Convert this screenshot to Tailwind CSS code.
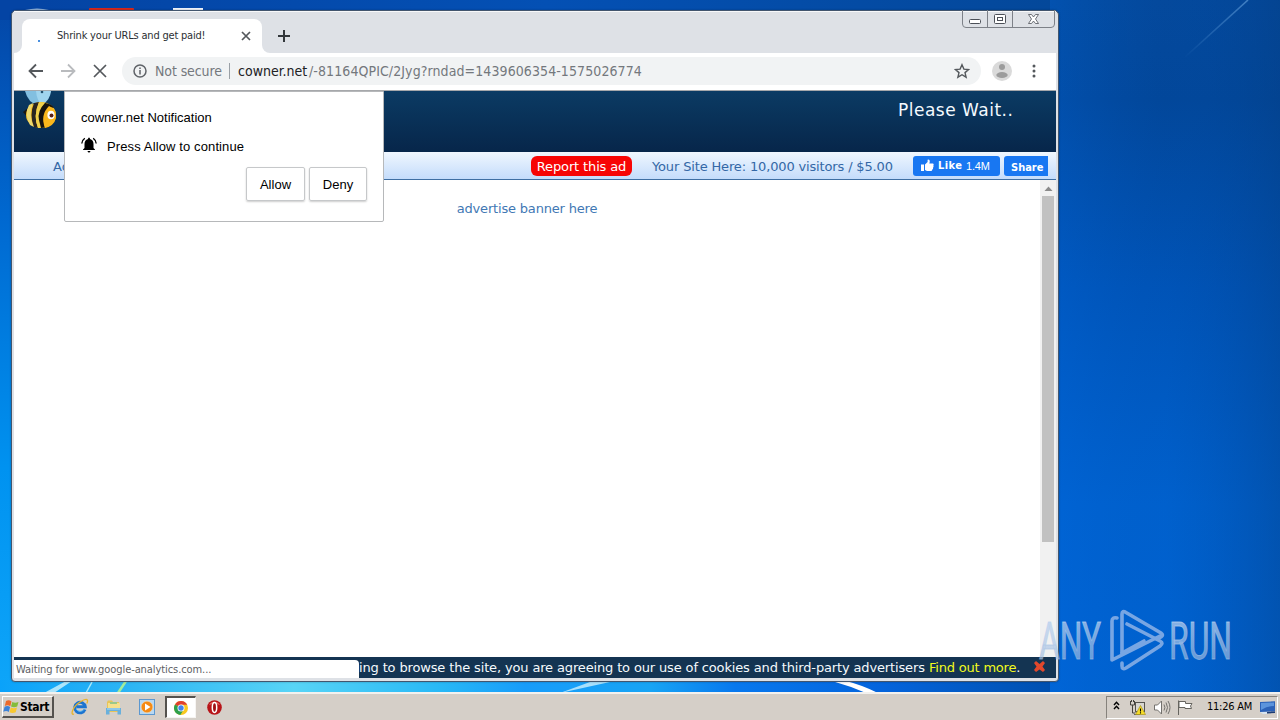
<!DOCTYPE html>
<html lang="en">
<head>
<meta charset="utf-8">
<title>Shrink your URLs and get paid!</title>
<script src="https://cdn.jsdelivr.net/npm/@tailwindcss/browser@4"></script>
</head>
<body class="w-[1280px] h-[720px] overflow-hidden relative bg-[#0068d8] font-['DejaVu_Sans',sans-serif]">

<!-- Desktop wallpaper -->
<svg class="absolute inset-0" width="1280" height="720" viewBox="0 0 1280 720">
  <defs>
    <linearGradient id="left" x1="0" y1="0" x2="0" y2="1">
      <stop offset="0" stop-color="#0446a6"/><stop offset=".3" stop-color="#0068d0"/><stop offset=".65" stop-color="#0092f0"/><stop offset="1" stop-color="#10a8fa"/>
    </linearGradient>
    <linearGradient id="right" x1="0" y1="0" x2="0" y2="1">
      <stop offset="0" stop-color="#04489a"/><stop offset=".14" stop-color="#024698"/><stop offset=".4" stop-color="#0054b8"/><stop offset=".7" stop-color="#0062d0"/><stop offset="1" stop-color="#0064d4"/>
    </linearGradient>
    <linearGradient id="shade" x1="0" y1="0" x2="1" y2="0">
      <stop offset="0" stop-color="#0068e0" stop-opacity=".3"/><stop offset=".5" stop-color="#0050b0" stop-opacity=".1"/><stop offset="1" stop-color="#044088" stop-opacity=".45"/>
    </linearGradient>
    <linearGradient id="glow" x1="0" y1="0" x2="1" y2="0">
      <stop offset="0" stop-color="#0aa2fa"/><stop offset=".12" stop-color="#2cb4f4"/><stop offset=".28" stop-color="#58d4f6"/><stop offset=".42" stop-color="#28b8f6"/><stop offset=".5" stop-color="#189cfa"/><stop offset=".62" stop-color="#18a4f4"/><stop offset=".7" stop-color="#0878ee"/><stop offset=".84" stop-color="#0464dc"/><stop offset="1" stop-color="#0050b0"/>
    </linearGradient>
    <linearGradient id="ray" x1="0" y1="1" x2="1" y2="0">
      <stop offset="0" stop-color="#6aa6e0" stop-opacity="0"/><stop offset="1" stop-color="#6aa6e0" stop-opacity=".6"/>
    </linearGradient>
    <linearGradient id="top" x1="0" y1="0" x2="1" y2="0">
      <stop offset="0" stop-color="#0444a4"/><stop offset=".5" stop-color="#0450b4"/><stop offset="1" stop-color="#04489a"/>
    </linearGradient>
    <linearGradient id="mark" x1="0" y1="0" x2="0" y2="1">
      <stop offset="0" stop-color="#c0d6f2" stop-opacity=".75"/><stop offset="1" stop-color="#9cb8dc" stop-opacity=".6"/>
    </linearGradient>
  </defs>
  <rect width="60" height="720" fill="url(#left)"/>
  <rect x="40" width="1012" height="20" fill="url(#top)"/>
  <rect width="40" height="20" fill="#0444a4"/>
  <rect x="1050" width="230" height="720" fill="url(#right)"/>
  <rect x="1050" width="230" height="720" fill="url(#shade)"/>
  <path d="M1184 58L1248 0" stroke="url(#ray)" stroke-width="1.6"/>
  <rect y="680" width="1050" height="14" fill="url(#glow)"/>
  <path d="M44 693L66 681H72L54 693Z" fill="#c8f0fc" opacity=".85"/>
  <path d="M86 693L92 682" stroke="#a8e8fa" stroke-width="1.5"/>
  <path d="M118 693L126 681" stroke="#a4ec9c" stroke-width="2.5"/>
  <path d="M560 693L590 682H610Z" fill="#a8e0fc"/>
  <path d="M832 681H846Q862 685 878 693H866Q850 686 832 681Z" fill="#fff"/>
  <!-- tops of the desktop icons -->
  <path d="M25 10Q37 7 49 10V12H25Z" fill="#8fb0d8"/>
  <rect x="89" y="8" width="45" height="5" rx="1" fill="#d8281c"/>
  <rect x="173" y="8" width="30" height="4" fill="#eef4fb"/>
</svg>

<!-- Browser window -->
<div class="absolute left-[11px] top-[10px] w-[1048px] h-[672px] rounded-t-[5px] rounded-b-[4px] border border-[#43566e] bg-[#dee1e6] px-[2px] pb-[3px] flex flex-col shadow-[0_0_2px_rgba(0,0,0,.3)]">
  <!-- Tab strip -->
  <div class="h-[42px] shrink-0 flex items-start border-t border-white/80">
    <div class="w-[8px] h-[41px] flex items-end overflow-hidden"><div class="w-[8px] h-[8px] bg-white"><div class="w-full h-full bg-[#dee1e6] rounded-br-[8px]"></div></div></div>
    <div class="mt-[7px] w-[240px] h-[34px] bg-white rounded-t-[8px] flex items-center text-[#3c4043] font-['DejaVu_Sans_Condensed','DejaVu_Sans',sans-serif]">
      <div class="ml-[16px] mt-[10px] size-[2px] bg-[#4a90e0]"></div>
      <span class="ml-[17px] w-[180px] text-[11px] whitespace-nowrap tracking-[-0.2px] text-[#2c2f33] pt-px">Shrink your URLs and get paid!</span>
      <svg class="ml-[4px]" width="10" height="10" viewBox="0 0 10 10" stroke="#54585c" stroke-width="1.7"><path d="M1 1l8 8M9 1L1 9"/></svg>
    </div>
    <div class="w-[8px] h-[41px] flex items-end"><div class="w-[8px] h-[8px] bg-white"><div class="w-full h-full bg-[#dee1e6] rounded-bl-[8px]"></div></div></div>
    <svg class="ml-[8px] mt-[18px]" width="12" height="12" viewBox="0 0 12 12" stroke="#33373b" stroke-width="2"><path d="M6 0v12M0 6h12"/></svg>
    <svg class="ml-auto -mt-[2px]" width="94" height="18" viewBox="0 0 94 18" fill="none" stroke="#7d8188">
      <path d="M.5 0V14Q.5 17.500 4 17.500H89Q92.500 17.500 92.500 14V0M25.500 0V17M50.500 0V17"/>
      <g stroke="#4c5058" fill="#fff"><rect x="7.500" y="9.500" width="11" height="4" rx="1"/><rect x="32.500" y="4.500" width="11" height="9" rx="1"/><rect x="35.500" y="7.500" width="5" height="3"/><path stroke-width=".8" d="M66.500 4.500H69.500L71.500 7 73.500 4.500H76.500L73.500 9 76.500 13.500H73.500L71.500 11 69.500 13.500H66.500L69.500 9Z"/></g>
    </svg>
  </div>
  <!-- Toolbar -->
  <div class="h-[38px] shrink-0 bg-white border-b border-[#a6a8ab] pb-[2px] flex items-center text-[#74787d] font-['DejaVu_Sans_Condensed','DejaVu_Sans',sans-serif] text-[14px]">
    <svg class="ml-[14px]" width="16" height="16" viewBox="0 0 16 16" fill="none" stroke="#54585c" stroke-width="1.800"><path d="M15 8H2M8 1.500L1.500 8 8 14.500"/></svg>
    <svg class="ml-[16px]" width="16" height="16" viewBox="0 0 16 16" fill="none" stroke="#b9bbbe" stroke-width="1.800"><path d="M1 8H14M8 1.500L14.500 8 8 14.500"/></svg>
    <svg class="ml-[17px]" width="14" height="14" viewBox="0 0 14 14" stroke="#54585c" stroke-width="1.700"><path d="M1 1l12 12M13 1L1 13"/></svg>
    <div class="ml-[15px] w-[859px] h-[28px] rounded-full bg-[#f1f3f4] flex items-center whitespace-nowrap">
      <svg class="ml-[11px]" width="14" height="14" viewBox="0 0 14 14" fill="none" stroke="#5f6368" stroke-width="1.500"><circle cx="7" cy="7" r="6"/><path d="M7 6v4.500M7 3.500v1.500"/></svg>
      <span class="ml-[8px] w-[74px] pt-px tracking-[-0.1px]">Not secure</span>
      <div class="w-px h-[16px] bg-[#9aa0a6]"></div>
      <span class="ml-[8px] w-[71px] pt-px text-[#202124]">cowner.net</span><span class="pt-px tracking-[0.09px]">/-81164QPIC/2Jyg?rndad=1439606354-1575026774</span>
      <svg class="ml-auto mr-[11px]" width="16" height="16" viewBox="0 0 16 16" fill="none" stroke="#54585c" stroke-width="1.400"><path d="M8 1.700L9.900 6.100 14.600 6.500 11 9.600 12.100 14.200 8 11.700 3.900 14.200 5 9.600 1.400 6.500 6.100 6.100Z"/></svg>
    </div>
    <svg class="ml-[11px]" width="20" height="20" viewBox="0 0 20 20"><circle cx="10" cy="10" r="10" fill="#dadada"/><circle cx="10" cy="6" r="3" fill="#9c9c9c"/><ellipse cx="10" cy="14" rx="5.700" ry="3" fill="#9c9c9c"/></svg>
    <svg class="ml-[20px]" width="4" height="14" viewBox="0 0 4 14" fill="#54585c"><circle cx="2" cy="2" r="1.500"/><circle cx="2" cy="7" r="1.500"/><circle cx="2" cy="12" r="1.500"/></svg>
  </div>
  <!-- Page -->
  <div class="flex-1 bg-white flex flex-col relative overflow-hidden">
    <div class="h-[61px] shrink-0 bg-gradient-to-b from-[#0b3b64] to-[#07264a] flex justify-end items-start">
      <svg class="mr-auto ml-[8px]" width="38" height="40" viewBox="0 0 38 40">
        <path d="M3 0Q6 12 16 14Q27 10 29 0Z" fill="#82bfe0"/><path d="M14 0Q15 12 21 13Q28 9 29 0Z" fill="#9fd4ee"/><circle cx="20" cy="1" r="1.300" fill="#20506e"/>
        <path d="M1 21L6 17V27Z" fill="#1a1712"/>
        <ellipse cx="19" cy="24" rx="15" ry="13" fill="#f4bd26"/>
        <path d="M7 14Q2 23 8 34L12 36Q6 24 11 12Z" fill="#ecd870"/>
        <path d="M12 12Q7 24 12 36L16 37Q11 25 17 11Z" fill="#2a2521"/>
        <path d="M17 11Q11 25 16 37H19Q16 24 23 12Z" fill="#f1d14c"/>
        <path d="M23 12Q15 20 17 29L19 37L23 36.500Q19 24 27 15Z" fill="#16130f"/>
        <path d="M23 12Q30 13 32 17Q26 15 22 23Z" fill="#16130f"/>
        <path d="M27 15Q35 18 34 27Q32 35 23 37Q18 24 27 15Z" fill="#f9b61b"/>
        <ellipse cx="29" cy="24" rx="3.600" ry="4.300" fill="#fff"/><circle cx="29.500" cy="24.500" r="2" fill="#5a1f14"/>
      </svg>
      <span class="mt-[8px] w-[158px] text-[17px] leading-[22px] tracking-[0.5px] text-[#f4faff] whitespace-nowrap">Please Wait..</span>
    </div>
    <div class="h-[28px] shrink-0 bg-gradient-to-b from-[#f0f7fe] to-[#c4dcfb] border-b border-[#3f6fa3] flex items-center text-[13px] text-[#3468a6] whitespace-nowrap">
      <span class="ml-[39px] w-[478px] pt-[2px]">Advertising</span>
      <span class="w-[101px] h-[20px] rounded-[6px] bg-[#f70505] text-white flex items-center justify-center pt-[2px] tracking-[-0.13px]">Report this ad</span>
      <span class="ml-[20px] w-[261px] pt-[2px] tracking-[-0.15px]">Your Site Here: 10,000 visitors / $5.00</span>
      <span class="w-[87px] h-[20px] rounded-[3px] bg-[#1877f2] text-white flex items-center font-['Liberation_Sans',sans-serif]">
        <svg class="ml-[8px]" width="13" height="13" viewBox="0 0 13 13" fill="#fff"><path d="M0 5.500H3V12H0ZM4 5.500L6.600 3V.8Q8.800 0 8.800 2.800L8.300 4.600H12Q13.200 5.300 12.300 6.800 13 7.800 12 8.700 12.400 9.800 11.300 10.500 11.300 12 9.800 12H6L4 11Z"/></svg>
        <span class="ml-[4px] w-[28px] pt-[2px] text-[11px] font-bold tracking-[0.4px] font-['DejaVu_Sans_Condensed','DejaVu_Sans',sans-serif]">Like</span><span class="text-[11px] pt-px tracking-[-0.2px]">1.4M</span>
      </span>
      <span class="ml-[4px] w-[44px] h-[20px] rounded-l-[3px] bg-[#1877f2] text-white font-bold text-[11px] pl-[7px] pt-[2px] leading-[20px] font-['DejaVu_Sans_Condensed','DejaVu_Sans',sans-serif]">Share</span>
    </div>
    <div class="flex-1 flex">
      <div class="flex-1 flex justify-center text-[13px] text-[#3f78b4] pt-[20px]"><span class="leading-[18px] tracking-[-0.18px]">advertise banner here</span></div>
      <div class="w-[16px] bg-[#f1f1f1] flex flex-col items-center">
        <svg class="mt-[4px]" width="9" height="9" viewBox="0 0 9 9" fill="#8a8a8a"><path d="M.5 7L4.500 2.500 8.500 7Z"/></svg>
        <div class="mt-[3px] w-[12px] h-[346px] bg-[#c1c1c1]"></div>
      </div>
    </div>
    <div class="h-[21px] shrink-0 bg-[#143452] text-[#f4fafd] text-[13px] leading-[21px] whitespace-nowrap flex items-center pl-[345px]">
      <span class="w-[570px] tracking-[-0.145px]">ing to browse the site, you are agreeing to our use of cookies and third-party advertisers</span>
      <span class="w-[104px] tracking-[-0.2px]"><span class="text-[#f2fb1c]">Find out more</span>.</span>
      <svg width="13" height="13" viewBox="0 0 13 13" class="-mt-[3px]"><path d="M3 1L6.500 4 10 1 12 3 9.500 6.500 12 10 10 12 6.500 9.500 3 12 1 10 3.500 6.500 1 3Z" fill="#e2482c"/></svg>
    </div>
    <!-- Status bubble -->
    <div class="absolute left-0 bottom-0 w-[345px] h-[18px] bg-white rounded-tr-[4px] pl-[2px] pt-px text-[11px] leading-[17px] tracking-[-0.08px] text-[#5c6064] whitespace-nowrap font-['DejaVu_Sans_Condensed','DejaVu_Sans',sans-serif]">Waiting for www.google-analytics.com...</div>
  </div>
</div>

<!-- Notification permission dialog -->
<div class="absolute left-[64px] top-[91px] w-[320px] h-[131px] bg-white border border-[#b6b8ba] rounded-b-[2px] px-[16px] text-black text-[13px] font-['Liberation_Sans',sans-serif] whitespace-nowrap">
  <div class="mt-[17px] leading-[18px]">cowner.net Notification</div>
  <div class="mt-[10px] flex items-center h-[20px]">
    <svg width="16" height="16" viewBox="0 0 16 16" class="-mt-[4px]"><path d="M8 .5Q9 .5 9 2Q12.500 3 12.500 7V11L14 12.500V13H2V12.500L3.500 11V7Q3.500 3 7 2Q7 .5 8 .5ZM6.500 14H9.500Q9.200 15.500 8 15.500T6.500 14Z"/><path d="M3.800 1.300Q1 3.300.8 6.500M12.200 1.300Q15 3.300 15.200 6.500" fill="none" stroke="#000" stroke-width="1.400"/></svg>
    <span class="ml-[10px] tracking-[0.12px]">Press Allow to continue</span>
  </div>
  <div class="mt-[10px] flex justify-end gap-[4px]">
    <div class="w-[59px] h-[34px] border border-[#c6c8ca] rounded-[2px] shadow-[0_1px_2px_rgba(0,0,0,.2)] flex items-center justify-center pt-px">Allow</div>
    <div class="w-[58px] h-[34px] border border-[#c6c8ca] rounded-[2px] shadow-[0_1px_2px_rgba(0,0,0,.2)] flex items-center justify-center pt-px">Deny</div>
  </div>
</div>

<!-- Watermark -->
<svg class="absolute left-[1030px] top-[604px]" width="240" height="80" viewBox="0 0 240 80">
  <g fill="url(#mark)" stroke="url(#mark)" stroke-width=".8" font-family="Roboto, sans-serif" font-size="52">
    <text x="9" y="55" textLength="62" lengthAdjust="spacingAndGlyphs">ANY</text>
    <text x="139" y="55" textLength="63" lengthAdjust="spacingAndGlyphs">RUN</text>
  </g>
  <g fill="none" stroke="#86aee6" stroke-width="3.600" stroke-linejoin="round" stroke-linecap="round" opacity=".9">
    <path d="M87 14Q82 13 82 17V56L130 32"/>
    <path d="M92 49V10Q92 6 96 8.500L131 29Q134 31 131 33L127 35"/>
    <path d="M97 20L130 37Q134 39 130 42L96 64Q92 66 92 62V59"/>
    <path d="M92 49L114 37"/>
  </g>
</svg>

<!-- Taskbar -->
<div class="absolute left-0 top-[692px] w-[1280px] h-[28px] bg-[#d5cfc8] border-t-2 border-[#f3f1ee] flex items-center pl-[2px] pr-[2px]">
  <div class="w-[52px] h-[22px] border-t border-l border-b-2 border-r-2 border-t-white border-l-white border-b-[#55524e] border-r-[#55524e] flex items-center text-black">
    <svg width="17" height="16" viewBox="0 0 17 16"><path d="M3 2Q6 .5 8.500 2.500L7.300 7.300Q5 5.500 1.800 7Z" fill="#ec6a2c"/><path d="M9.300 3Q12 4.500 15.500 3L14.200 7.600Q11 9 8 7.600Z" fill="#84bc3c"/><path d="M1.600 7.800Q4.800 6.300 7.100 8.100L5.800 13Q3.500 11.200.3 12.700Z" fill="#3c82d8"/><path d="M7.800 8.500Q10.600 10 14 8.500L12.700 13.300Q9.500 14.800 6.500 13.300Z" fill="#f8c830"/></svg>
    <span class="text-[12px] font-bold tracking-[-0.35px] leading-[18px] font-['DejaVu_Sans_Condensed','DejaVu_Sans',sans-serif]">Start</span>
  </div>
  <!-- Internet Explorer -->
  <svg class="ml-[17px]" width="18" height="18" viewBox="0 0 18 18" fill="none"><path d="M14 11.500A5.300 5.300 0 1 1 14.300 8.800H5.500" stroke="#1c74d0" stroke-width="2.900"/><path d="M13.500 10.800A5 5 0 0 1 5 11" stroke="#58b8f4" stroke-width="1"/><path d="M3 16Q.5 17 1.300 13.500Q3 8 9 4Q15 .3 16.300 2Q17 3 15.800 5.500" stroke="#e8b42c" stroke-width="1.300"/></svg>
  <!-- Explorer -->
  <svg class="ml-[16px] mt-px" width="17" height="17" viewBox="0 0 17 17"><path d="M2 3L3 1.500H7L8 3H14V13H2Z" fill="#e8c458"/><path d="M3 4H15V12H3Z" fill="#f6e08c"/><path d="M5 3H12V5H5Z" fill="#9cc888"/><path d="M1 9H16V15.500H12.500V12H4.500V15.500H1Z" fill="#69b0dc"/><path d="M2 10H15" stroke="#b4def4"/></svg>
  <!-- Media player -->
  <svg class="ml-[17px]" width="16" height="16" viewBox="0 0 16 16"><rect x=".5" y=".5" width="15" height="15" fill="#b8d8f2" stroke="#5c98d0"/><circle cx="8" cy="8" r="5.800" fill="#f58a14" stroke="#fbd49c" stroke-width=".6"/><path d="M6 4.500L11.500 8 6 11.500Z" fill="#fff"/></svg>
  <!-- Chrome -->
  <div class="ml-[10px] w-[31px] h-[22px] bg-white border-t-2 border-l-2 border-b border-r border-t-[#55524e] border-l-[#55524e] border-b-[#f6f4f2] border-r-[#f6f4f2] flex items-center justify-center">
    <svg width="14" height="14" viewBox="0 0 14 14"><circle cx="7" cy="7" r="7" fill="#f8c820"/><path d="M7 7L1 3.400A7 7 0 0 1 13.200 3.800H7Z" fill="#e04030"/><path d="M7 7L1 3.400A7 7 0 0 0 6.300 14L9.800 8.400Z" fill="#2ea04c"/><circle cx="7" cy="7" r="3.500" fill="#fff"/><circle cx="7" cy="7" r="2.700" fill="#4284ec"/></svg>
  </div>
  <!-- Opera -->
  <svg class="ml-[11px]" width="15" height="15" viewBox="0 0 15 15"><circle cx="7.500" cy="7.500" r="7.300" fill="#b81418"/><path d="M2 5A6.300 6.300 0 0 1 13 5Q7.500 3 2 5Z" fill="#e4605c"/><ellipse cx="7.500" cy="7.500" rx="2.200" ry="4.900" fill="#a01014" stroke="#fff" stroke-width="1.500"/></svg>
  <!-- Notification area -->
  <div class="ml-auto w-[172px] h-[23px] border border-t-[#86827c] border-l-[#86827c] border-b-white border-r-white flex items-center text-black">
    <svg class="ml-[6px] -mt-[3px]" width="7" height="9" viewBox="0 0 7 9" fill="none" stroke="#000" stroke-width="1.400"><path d="M1 4L3.500 1.200 6 4M1 8L3.500 5.200 6 8"/></svg>
    <svg class="ml-[9px]" width="17" height="17" viewBox="0 0 17 17"><rect x="6.500" y="3.500" width="9" height="9" fill="#d8d6d0" stroke="#55534f"/><path d="M6 13H11V15.500H5" fill="none" stroke="#66645f"/><path d="M1.500 2V6H5.500V2M3.500 6V14H6M2.500 1V3M4.500 1V3" fill="none" stroke="#45433f"/><path d="M11.500 6.500L16.500 15.500H6.500Z" fill="#f6dc28" stroke="#a08810" stroke-width=".6"/><path d="M11.500 9.500V12.500M11.500 13.300V14.500" stroke="#000" stroke-width="1.100"/></svg>
    <svg class="ml-[8px]" width="17" height="15" viewBox="0 0 17 15" fill="#fff" stroke="#74726e"><path d="M.5 5H3.500L7.500 1V14L3.500 10H.5Z"/><path d="M10 4.500Q11.800 7.500 10 10.500M12 2.500Q15 7.500 12 12.500M14 1Q18 7.500 14 14" fill="none"/></svg>
    <svg class="ml-[6px]" width="17" height="15" viewBox="0 0 17 15" fill="#fff" stroke="#66645f"><path d="M1.500 .5V15M2 1.500H8.500V3.500H15L13.500 6 14.500 8.500H8V7.500H2Z"/></svg>
    <span class="ml-[13px] w-[53px] text-[11px] tracking-[-0.25px] whitespace-nowrap font-['DejaVu_Sans_Condensed','DejaVu_Sans',sans-serif]">11:26 AM</span>
    <svg width="16" height="13" viewBox="0 0 16 13"><path d="M0 1L15 .3V10.500L0 11Z" fill="#2c62b8"/><path d="M1 2L14 1.500V5Q7 5 1 9Z" fill="#5c94dc"/><path d="M0 11H7V13H3Z" fill="#d8e4f0"/><path d="M7 11L15 10.500V12L7 12.500Z" fill="#1c3c74"/></svg>
  </div>
</div>
</body>
</html>
